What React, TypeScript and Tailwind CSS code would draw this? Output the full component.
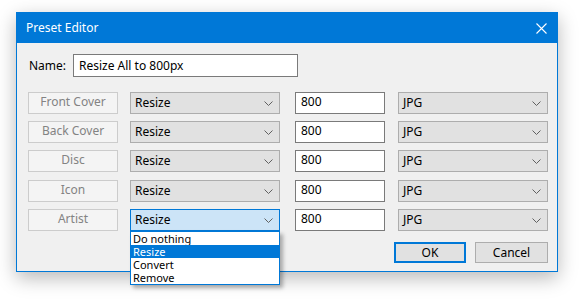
import { useState } from "react";

const font = "font-['Noto_Sans','Open_Sans',sans-serif]";

function Chevron() {
  return (
    <svg width="9" height="5" viewBox="0 0 9 5" className="shrink-0">
      <path d="M0.5 0.5 L4.5 4.5 L8.5 0.5" fill="none" stroke="#606060" strokeWidth="1" />
    </svg>
  );
}

function Combo({ value, width, active }: { value: string; width: string; active?: boolean }) {
  return (
    <div
      className={`${width} h-[22px] flex items-center justify-between pl-[4px] pr-[6px] border ${
        active ? "border-[#0078d7] bg-[#cce4f7]" : "border-[#adadad] bg-[#e1e1e1]"
      }`}
    >
      <span className="text-[12px] leading-none text-black">{value}</span>
      <Chevron />
    </div>
  );
}

const rows = ["Front Cover", "Back Cover", "Disc", "Icon", "Artist"];
const options = ["Do nothing", "Resize", "Convert", "Remove"];

export default function App() {
  const [name] = useState("Resize All to 800px");

  return (
    <div className={`min-h-screen bg-white pt-[12px] pl-[16px] ${font}`}>
      <div className="w-[542px] h-[260px] border border-[#0078d7] bg-[#f0f0f0] flex flex-col shadow-[0_6px_18px_rgba(0,0,0,0.28)]">
        {/* title bar */}
        <div className="h-[30px] bg-[#0078d7] flex items-center justify-between pl-[9px] pr-[10px]">
          <span className="text-[12px] text-white">Preset Editor</span>
          <svg width="11" height="11" viewBox="0 0 11 11">
            <path d="M0.5 0.5 L10.5 10.5 M10.5 0.5 L0.5 10.5" stroke="#fff" strokeWidth="1.1" />
          </svg>
        </div>

        <div className="relative flex-1 pl-[11px] pr-[8px]">
          <div className="flex items-center mt-[11px]">
            <label className="w-[45px] pl-[1px] text-[12px] text-black">Name:</label>
            <div className="w-[225px] h-[23px] border border-[#7a7a7a] bg-white flex items-center pl-[5px]">
              <span className="text-[12px] text-black">{name}</span>
            </div>
          </div>

          <div className="flex flex-col gap-[7px] mt-[15px]">
            {rows.map((r, i) => (
              <div key={r} className={`flex items-center h-[22px] ${i === 3 ? "mt-[1px]" : ""}`}>
                <div className="w-[90px] h-[22px] border border-[#cccccc] bg-[#f4f4f4] flex items-center justify-center pb-[2px]">
                  <span className="text-[12px] text-[#838383]">{r}</span>
                </div>
                <div className="ml-[12px]">
                  <Combo value="Resize" width="w-[150px]" active={i === 4} />
                </div>
                <div className="ml-[15px] w-[90px] h-[22px] border border-[#7a7a7a] bg-white flex items-center pl-[5px] pb-[2px]">
                  <span className="text-[12px] text-black">800</span>
                </div>
                <div className="ml-[13px]">
                  <Combo value="JPG" width="w-[150px]" />
                </div>
              </div>
            ))}
          </div>

          <div className="flex justify-end gap-[9px] mt-[11px] pr-[1px]">
            <button className="w-[72px] h-[21px] border-2 border-[#0078d7] bg-[#e1e1e1] text-[12px] text-black leading-none">
              OK
            </button>
            <button className="w-[73px] h-[21px] border border-[#adadad] bg-[#e1e1e1] text-[12px] text-black leading-none">
              Cancel
            </button>
          </div>

          {/* open dropdown list */}
          <div className="absolute left-[113px] top-[188px] w-[150px] border border-[#0078d7] bg-white shadow-[3px_3px_4px_rgba(0,0,0,0.3)] z-10">
            {options.map((o) => (
              <div
                key={o}
                className={`h-[13px] pl-[2px] text-[11px] leading-[13px] overflow-hidden ${
                  o === "Resize" ? "bg-[#0078d7] text-white" : "text-black"
                }`}
              >
                {o}
              </div>
            ))}
          </div>
        </div>
      </div>
    </div>
  );
}
